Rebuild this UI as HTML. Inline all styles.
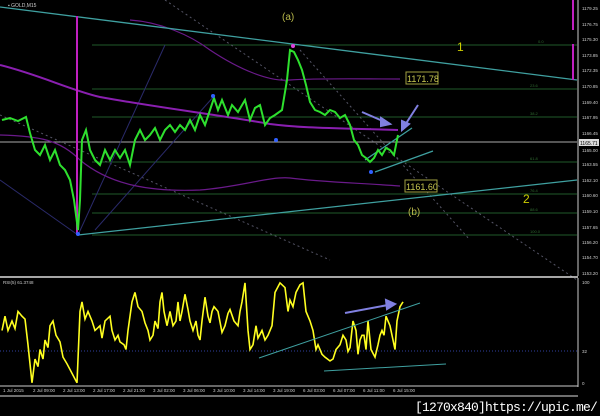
<!DOCTYPE html><html><head><style>body{margin:0;background:#000;width:600px;height:416px;overflow:hidden}svg{display:block}</style></head><body>
<svg width="600" height="416" viewBox="0 0 600 416" xmlns="http://www.w3.org/2000/svg" font-family="Liberation Sans, sans-serif">
<rect width="600" height="416" fill="#000"/>
<g stroke="#1f5a2a" stroke-width="1">
<line x1="92" y1="45" x2="577" y2="45"/><line x1="92" y1="89" x2="577" y2="89"/><line x1="92" y1="117" x2="577" y2="117"/><line x1="92" y1="162" x2="577" y2="162"/><line x1="92" y1="194" x2="577" y2="194"/><line x1="92" y1="213" x2="577" y2="213"/><line x1="92" y1="235" x2="577" y2="235"/>
</g>
<line x1="0" y1="142" x2="577" y2="142" stroke="#aaa" stroke-width="1"/>
<g fill="#2f6a30" font-size="4"><text x="538" y="43">0.0</text><text x="530" y="87">23.6</text><text x="530" y="115">38.2</text><text x="530" y="160">61.8</text><text x="530" y="192">76.4</text><text x="530" y="211">88.6</text><text x="530" y="233">100.0</text></g>
<g stroke="#556" stroke-dasharray="2,3" fill="none">
<line x1="165" y1="0" x2="577" y2="280"/><line x1="300" y1="50" x2="470" y2="240"/><line x1="0" y1="115" x2="330" y2="260"/>
</g>
<g stroke="#2a2a6a" fill="none"><line x1="0" y1="180" x2="78" y2="235"/><line x1="78" y1="235" x2="165" y2="45"/><line x1="215" y1="95" x2="95" y2="230"/></g>
<g fill="none" stroke="#8a1fb0" stroke-width="2"><path d="M0 65 C40 75 70 90 100 97 C160 108 220 115 270 124 C300 128 330 128 398 130"/></g>
<g fill="none" stroke="#6a1a8a" stroke-width="1.2">
<path d="M0 135 C40 136 60 140 80 160 C110 185 150 192 200 190 C240 187 270 176 290 178 C320 182 360 183 400 186"/>
<path d="M130 20 C160 22 190 35 210 50 C240 70 270 82 290 80 C320 78 360 79 400 79"/>
</g>
<g stroke="#3fa0a0" stroke-width="1.3" fill="none"><line x1="0" y1="7" x2="577" y2="80"/><line x1="78" y1="235" x2="577" y2="180"/>
<line x1="375" y1="172" x2="433" y2="151"/><line x1="365" y1="160" x2="412" y2="128"/></g>
<line x1="77" y1="16" x2="77" y2="235" stroke="#c020c0" stroke-width="2"/>
<line x1="573" y1="0" x2="573" y2="30" stroke="#c020c0" stroke-width="2"/><line x1="573" y1="44" x2="573" y2="80" stroke="#c020c0" stroke-width="2"/>
<polyline fill="none" stroke="#2ee02e" stroke-width="2" points="2,120 10,118 18,121 26,117 30,133 35,150 40,155 45,145 50,160 55,150 60,165 65,170 70,180 74,200 78,230 80,200 82,140 86,130 90,150 95,160 100,165 105,150 110,160 115,150 120,158 125,150 130,165 135,140 140,130 145,140 150,135 155,128 160,140 165,130 170,125 175,132 180,125 185,130 190,120 195,130 200,115 205,125 210,110 214,98 218,110 222,100 228,115 232,105 238,112 245,100 250,120 255,108 260,105 265,125 270,118 275,115 282,110 287,80 290,50 294,52 298,60 302,70 306,85 310,102 315,110 320,112 325,115 330,110 335,112 340,118 345,115 350,125 354,140 358,145 362,155 366,158 370,162 374,158 378,150 382,155 386,148 390,150 394,155 398,135"/>
<g fill="#3060ff"><circle cx="78" cy="234" r="2"/><circle cx="213" cy="96" r="2"/><circle cx="276" cy="140" r="2"/><circle cx="371" cy="172" r="2"/></g>
<circle cx="293" cy="46" r="2" fill="#e040e0"/>
<g stroke="#8080e0" stroke-width="2" fill="#8080e0"><line x1="362" y1="112" x2="385" y2="122"/><polygon points="390,124 381,118 381,126"/><line x1="418" y1="105" x2="405" y2="125"/><polygon points="402,130 402,121 409,124"/></g>
<g font-size="10" fill="#cccc00"><text x="282" y="20" fill="#b8b84a">(a)</text><text x="457" y="51" font-size="12">1</text><text x="523" y="203" font-size="12">2</text><text x="408" y="215" fill="#b8b84a">(b)</text></g>
<g font-size="9" fill="#c8c850"><rect x="406" y="72" width="32" height="12" fill="#000" stroke="#a0a040"/><text x="407" y="82">1171.78</text><rect x="405" y="180" width="32" height="12" fill="#000" stroke="#a0a040"/><text x="406" y="190">1161.60</text></g>
<text x="8" y="7" font-size="5" fill="#ccc">▪ GOLD,M15</text>
<line x1="578" y1="0" x2="578" y2="276" stroke="#ccc"/>
<g font-size="4.5" fill="#ccc"><text x="582" y="10">1179.25</text><text x="582" y="26">1176.75</text><text x="582" y="41">1175.30</text><text x="582" y="57">1173.85</text><text x="582" y="72">1172.35</text><text x="582" y="88">1170.85</text><text x="582" y="104">1169.40</text><text x="582" y="119">1167.95</text><text x="582" y="135">1166.45</text><text x="582" y="166">1163.55</text><text x="582" y="152">1165.00</text><text x="582" y="182">1162.10</text><text x="582" y="197">1160.60</text><text x="582" y="213">1159.10</text><text x="582" y="229">1157.65</text><text x="582" y="244">1156.20</text><text x="582" y="259">1154.70</text><text x="582" y="275">1153.20</text></g>
<rect x="579" y="139" width="20" height="7" fill="#ddd"/><text x="580" y="145" font-size="5" fill="#000">1165.71</text>
<line x1="0" y1="277" x2="578" y2="277" stroke="#ddd" stroke-width="1.5"/>
<text x="3" y="284" font-size="4.5" fill="#ccc">RSI(5) 61.3748</text>
<line x1="0" y1="351" x2="578" y2="351" stroke="#3040a0" stroke-dasharray="1,2"/>
<line x1="578" y1="278" x2="578" y2="387" stroke="#ccc"/>
<g font-size="4.5" fill="#ccc"><text x="582" y="284">100</text><text x="582" y="353">32</text><text x="582" y="385">0</text></g>
<g transform="translate(0,6.8) scale(1,0.952)">
<polyline fill="none" stroke="#ffff20" stroke-width="1.6" points="2,340 5,325 8,340 12,330 15,338 18,320 22,325 25,328 28,355 32,395 35,370 38,378 40,360 43,370 45,350 48,358 50,335 53,330 56,345 60,352 63,368 67,375 72,385 77,395 80,320 82,310 85,328 88,320 92,330 95,340 100,335 102,348 105,330 110,325 112,340 115,350 118,345 120,352 124,355 126,360 128,340 132,310 135,300 138,315 142,320 145,332 148,340 150,350 153,345 155,330 158,338 160,310 162,300 164,320 167,335 170,320 173,335 176,330 178,310 180,330 182,320 185,302 188,318 190,330 193,340 196,330 198,345 200,350 202,330 205,305 208,325 210,332 212,320 214,315 218,320 222,342 225,335 228,322 230,318 234,330 238,335 240,320 242,310 245,290 248,340 250,360 253,355 256,335 258,348 262,340 265,350 268,345 272,335 275,300 280,290 285,295 288,320 290,308 293,315 296,300 300,292 303,290 306,320 310,330 313,340 316,360 318,355 322,365 325,368 330,372 333,370 336,360 340,355 343,345 346,350 348,362 350,358 353,330 356,340 358,365 360,350 362,345 364,345 366,360 368,330 371,360 375,368 378,355 380,345 382,340 384,345 386,325 390,335 392,345 395,360 397,330 400,315 403,310"/>
</g>
<g stroke="#3fa0a0" stroke-width="1" fill="none"><line x1="259" y1="358" x2="420" y2="303"/><line x1="324" y1="371" x2="446" y2="364"/></g>
<g stroke="#8080e0" stroke-width="2" fill="#8080e0"><line x1="345" y1="313" x2="388" y2="305"/><polygon points="395,304 386,300 387,309"/></g>
<line x1="0" y1="386" x2="578" y2="386" stroke="#ccc"/>
<g font-size="4.5" fill="#ccc"><text x="3" y="392">1 Jul 2015</text><text x="33" y="392">2 Jul 09:00</text><text x="63" y="392">2 Jul 13:00</text><text x="93" y="392">2 Jul 17:00</text><text x="123" y="392">2 Jul 21:00</text><text x="153" y="392">3 Jul 02:00</text><text x="183" y="392">3 Jul 06:00</text><text x="213" y="392">3 Jul 10:00</text><text x="243" y="392">3 Jul 14:00</text><text x="273" y="392">3 Jul 19:00</text><text x="303" y="392">6 Jul 03:00</text><text x="333" y="392">6 Jul 07:00</text><text x="363" y="392">6 Jul 11:00</text><text x="393" y="392">6 Jul 15:00</text></g>
<line x1="0" y1="396" x2="578" y2="396" stroke="#ddd"/>
<text x="597" y="411" font-size="13" fill="#fff" text-anchor="end" font-family="Liberation Mono, monospace" letter-spacing="-0.8">[1270x840]https://upic.me/</text>
</svg></body></html>
